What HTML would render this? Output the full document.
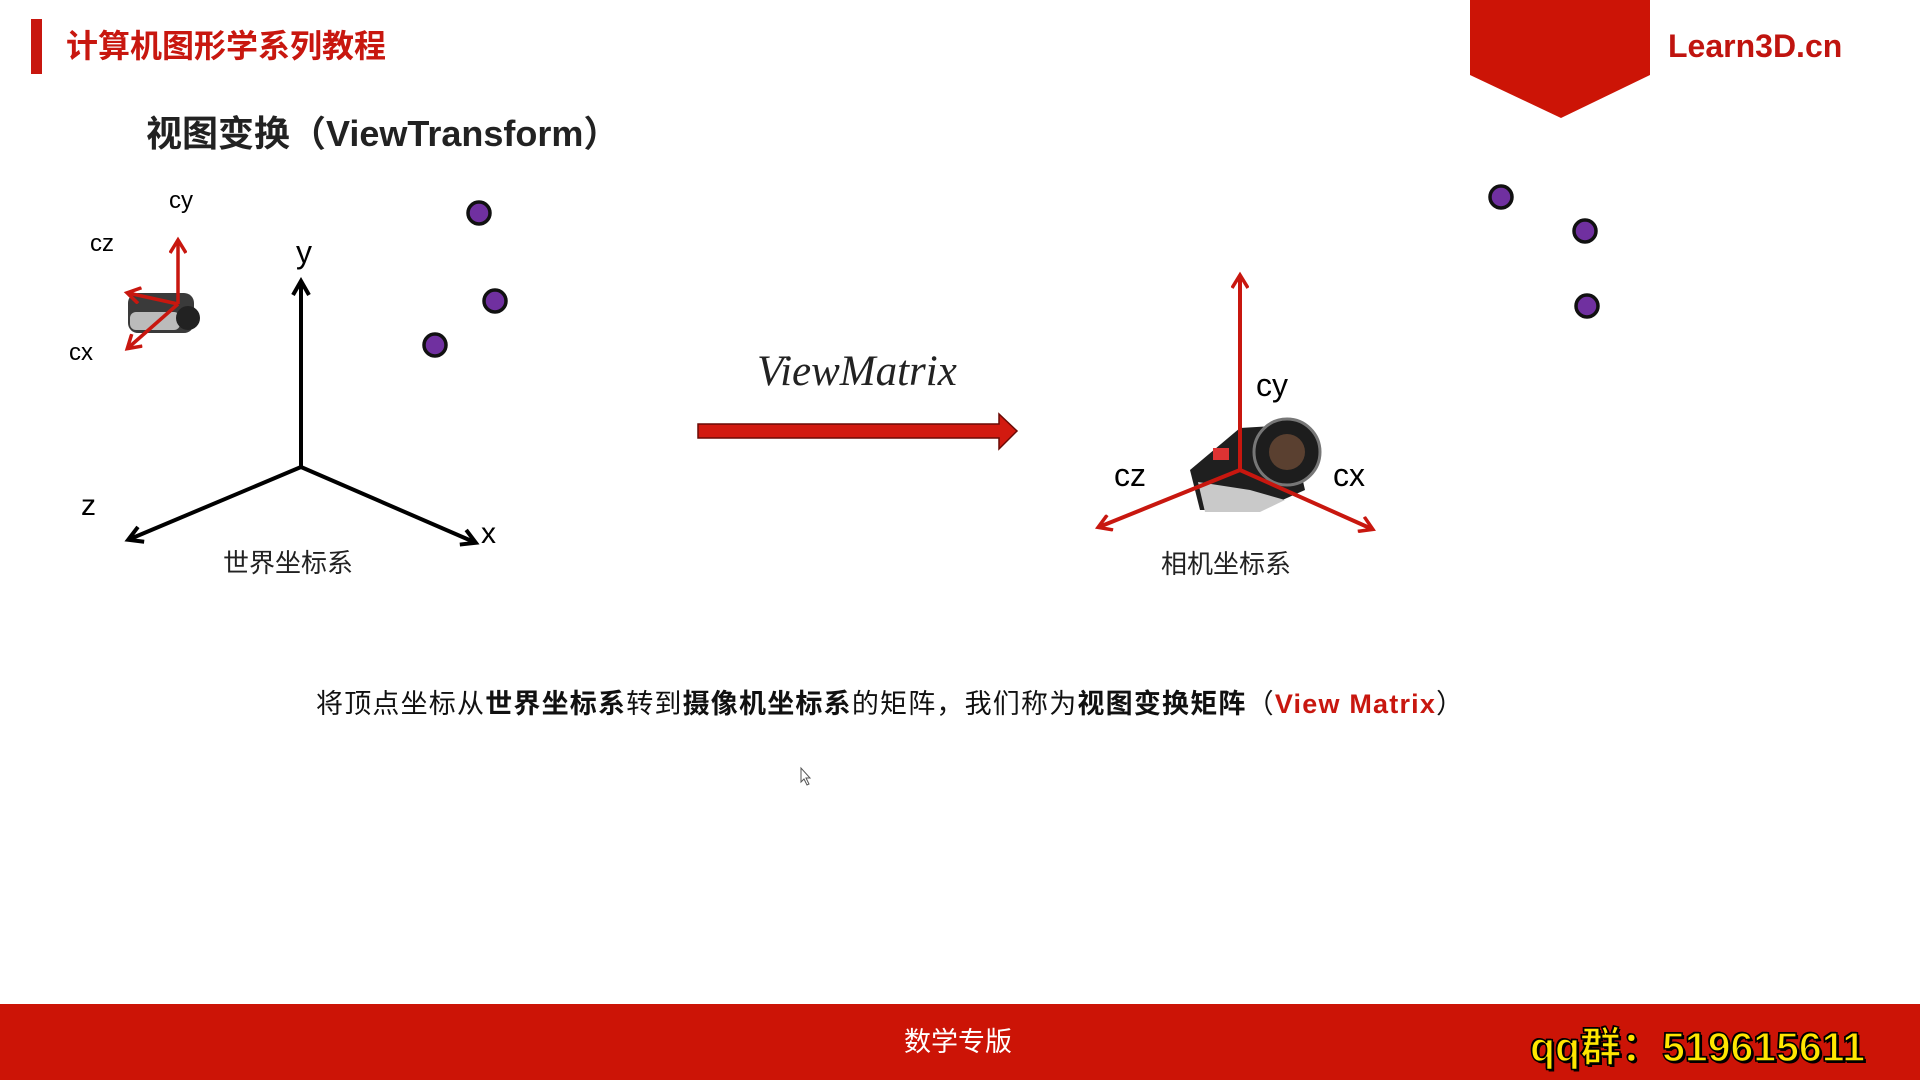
<!DOCTYPE html>
<html><head><meta charset="utf-8"><style>
html,body{margin:0;padding:0;width:1920px;height:1080px;overflow:hidden;background:#fff;position:relative;font-family:"Liberation Sans","Noto Sans CJK SC",sans-serif}
.a{position:absolute;white-space:nowrap}
</style></head><body>
<div class="a" style="left:31px;top:19px;width:11px;height:55px;background:#c8170f"></div>
<div class="a" style="left:66px;top:26px;font-size:32px;line-height:40px;font-weight:bold;color:#c8170f">计算机图形学系列教程</div>
<div class="a" style="left:146px;top:112px;font-size:36px;line-height:44px;font-weight:bold;color:#222">视图变换（ViewTransform）</div>
<svg class="a" style="left:0;top:0" width="1920" height="1080">
<polygon points="1470,0 1650,0 1650,75 1561,118 1470,75" fill="#cc1406"/>
<defs>
<marker id="ab" markerWidth="20" markerHeight="20" refX="14" refY="10" orient="auto" markerUnits="userSpaceOnUse" viewBox="0 0 20 20"><path d="M2,2 L16,10 L2,18" fill="none" stroke="#000" stroke-width="4"/></marker>
<marker id="ar" markerWidth="18" markerHeight="18" refX="13" refY="9" orient="auto" markerUnits="userSpaceOnUse" viewBox="0 0 18 18"><path d="M1,1 L14,9 L1,17" fill="none" stroke="#c8170f" stroke-width="3.5"/></marker>
</defs>
<g stroke="#000" stroke-width="4" fill="none">
<line x1="301" y1="467" x2="301" y2="283" marker-end="url(#ab)"/>
<line x1="301" y1="467" x2="130" y2="539" marker-end="url(#ab)"/>
<line x1="301" y1="467" x2="474" y2="542" marker-end="url(#ab)"/>
</g>
<g fill="#7030a0" stroke="#111" stroke-width="3.5">
<circle cx="479" cy="213" r="11"/><circle cx="495" cy="301" r="11"/><circle cx="435" cy="345" r="11"/>
<circle cx="1501" cy="197" r="11"/><circle cx="1585" cy="231" r="11"/><circle cx="1587" cy="306" r="11"/>
</g>
<g>
<rect x="128" y="293" width="66" height="40" rx="10" fill="#3a3a3a"/>
<rect x="130" y="312" width="50" height="18" rx="6" fill="#bbb"/>
<circle cx="188" cy="318" r="12" fill="#222"/>
</g>
<g stroke="#c8170f" stroke-width="3.5" fill="none">
<line x1="178" y1="304" x2="178" y2="241" marker-end="url(#ar)"/>
<line x1="178" y1="304" x2="128" y2="348" marker-end="url(#ar)"/>
<line x1="178" y1="304" x2="128" y2="293" marker-end="url(#ar)"/>
</g>
<polygon points="698,424 999,424 999,414 1017,431 999,449 999,438 698,438" fill="#d21a10" stroke="#6a0a05" stroke-width="1.5"/>
<g>
<path d="M1190,470 L1240,428 L1290,425 L1305,490 L1260,510 L1200,510 Z" fill="#1f1f1f"/>
<path d="M1198,482 L1250,490 L1285,500 L1260,512 L1205,512 Z" fill="#c9c9c9"/>
<circle cx="1287" cy="452" r="33" fill="#1d1d1d" stroke="#777" stroke-width="3"/>
<circle cx="1287" cy="452" r="18" fill="#5a4030"/>
<rect x="1213" y="448" width="16" height="12" fill="#d33"/>
</g>
<g stroke="#c8170f" stroke-width="4" fill="none">
<line x1="1240" y1="470" x2="1240" y2="276" marker-end="url(#ar)"/>
<line x1="1240" y1="470" x2="1099" y2="527" marker-end="url(#ar)"/>
<line x1="1240" y1="470" x2="1372" y2="529" marker-end="url(#ar)"/>
</g>
<path d="M801,768 L801,782 L804,779 L807,785 L809,784 L806,778 L810,778 Z" fill="#fff" stroke="#555" stroke-width="1"/>
<rect x="0" y="1004" width="1920" height="76" fill="#cc1406"/>
</svg>
<div class="a" style="left:1668px;top:26px;font-size:32px;line-height:40px;font-weight:bold;color:#c0140f">Learn3D.cn</div>
<div class="a" style="left:296px;top:234px;font-size:32px;line-height:36px">y</div>
<div class="a" style="left:81px;top:488px;font-size:30px;line-height:36px">z</div>
<div class="a" style="left:481px;top:516px;font-size:30px;line-height:36px">x</div>
<div class="a" style="left:223px;top:547px;font-size:26px;line-height:32px;color:#222">世界坐标系</div>
<div class="a" style="left:169px;top:186px;font-size:24px;line-height:30px">cy</div>
<div class="a" style="left:90px;top:229px;font-size:24px;line-height:30px">cz</div>
<div class="a" style="left:69px;top:338px;font-size:24px;line-height:30px">cx</div>
<div class="a" style="left:757px;top:348px;font-size:43px;line-height:48px;font-style:italic;font-family:'Liberation Serif',serif;color:#222">ViewMatrix</div>
<div class="a" style="left:1256px;top:366px;font-size:32px;line-height:38px">cy</div>
<div class="a" style="left:1114px;top:456px;font-size:32px;line-height:38px">cz</div>
<div class="a" style="left:1333px;top:456px;font-size:32px;line-height:38px">cx</div>
<div class="a" style="left:1161px;top:548px;font-size:26px;line-height:32px;color:#222">相机坐标系</div>
<div class="a" style="left:316px;top:688px;font-size:27px;line-height:32px;letter-spacing:1.2px;color:#111">将顶点坐标从<b>世界坐标系</b>转到<b>摄像机坐标系</b>的矩阵，我们称为<b>视图变换矩阵</b>（<b style="color:#c8170f">View Matrix</b>）</div>
<div class="a" style="left:904px;top:1026px;font-size:27px;line-height:32px;color:#fff">数学专版</div>
<div class="a" style="left:1530px;top:1022px;font-size:41px;line-height:50px;font-weight:bold;color:#ffe600;-webkit-text-stroke:1.5px #000;text-shadow:2px 2px 0 #000,-1px -1px 0 #000">qq群：519615611</div>
</body></html>
